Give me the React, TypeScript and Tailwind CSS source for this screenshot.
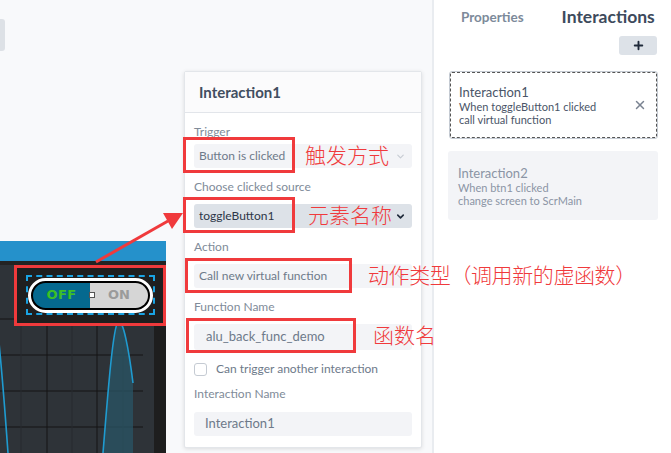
import { X, ChevronDown, Plus } from 'lucide-react';

const RED = '#f03a3c';

const Field = ({ value, dark, chevron }: { value: string; dark?: boolean; chevron?: 'light' | 'dark' }) => (
    <div className={`h-[24px] rounded-[3px] flex items-center justify-between pr-[6px] pl-[5px] text-[12px] ${dark ? 'bg-[#dde2e8] text-[#2d3748]' : 'bg-[#f3f4f7] text-[#6e7a8a]'}`}>
        <span>{value}</span>
        {chevron === 'light' && <ChevronDown size={11} strokeWidth={2.5} className="text-[#c7ccd3]" />}
        {chevron === 'dark' && <ChevronDown size={11} strokeWidth={3.5} className="text-[#1f2a3a]" />}
    </div>
);

const Label = ({ children, className = '' }: { children: React.ReactNode; className?: string }) => (
    <div className={`text-[12px] leading-[16px] text-[#808b99] ${className}`}>{children}</div>
);

const Device = () => (
    <div className="w-[166px] h-[212px] flex flex-col bg-[#1f1f1f]">
        <div className="h-[20px] bg-[#2591cb]" />
        <div className="h-[4px] bg-[#232323]" />
        <div className="relative flex-1 bg-[#2e3338]">
            <svg className="absolute inset-0" width="166" height="188" viewBox="0 24 166 188">
                <rect x="154" y="24" width="12" height="188" fill="#1e1e1e" />
                {[78, 114, 150, 186].map(y => (
                    <line key={y} x1="0" y1={y} x2="143" y2={y} stroke="#151515" strokeWidth="1" />
                ))}
                {[21, 72, 123].map(x => (
                    <line key={x} x1={x} y1="84" x2={x} y2="212" stroke="#262a2e" strokeWidth="1" />
                ))}
                {[47, 97].map(x => (
                    <line key={x} x1={x} y1="84" x2={x} y2="212" stroke="#151515" strokeWidth="1" />
                ))}
                <path d="M103 212 C108 150 113 86 118 81 C123 76 129 110 133 142 L133 212 Z" fill="#2a5566" fillOpacity="0.75" />
                <path d="M103 212 C108 150 113 86 118 81 C123 76 129 110 133 142" fill="none" stroke="#1f9bd0" strokeWidth="1.6" />
                <path d="M-2 92 C2 130 5 170 8 212" fill="none" stroke="#1f9bd0" strokeWidth="1.6" />
            </svg>
            <div className="relative ml-[14px] w-[152px] h-[60px] bg-[#1f1f1f] flex items-center pl-[12px]">
                <div className="w-[129px] h-[40px] border-2 border-dashed border-[#1aa3e2] flex items-center justify-center">
                    <div className="relative w-[125px] h-[35px] rounded-full border-[3px] border-white bg-black p-[2px] flex">
                        <div className="flex-1 flex rounded-full overflow-hidden">
                            <div className="w-[57px] bg-[#05698f] flex items-center justify-center text-[13px] font-bold text-[#3cc025] font-['DejaVu_Sans',sans-serif] tracking-wide">OFF</div>
                            <div className="flex-1 bg-[#d6d6d6] flex items-center justify-center text-[13px] font-bold text-[#9b9b9b] font-['DejaVu_Sans',sans-serif]">ON</div>
                        </div>
                        <div className="absolute left-[58px] top-[11px] w-[6px] h-[6px] bg-white border border-[#555]" />
                    </div>
                </div>
            </div>
        </div>
    </div>
);

const Annotations = () => (
    <div className="absolute inset-0 pointer-events-none font-['Noto_Sans_CJK_SC',sans-serif] font-light text-[21px] leading-none" style={{ color: RED }}>
        <div className="absolute left-[14px] top-[265px] w-[152px] h-[61px] border-[3px] border-[#f03a3c]" />
        <div className="absolute left-[183px] top-[137px] w-[112px] h-[36px] border-[3px] border-[#f03a3c]" />
        <div className="absolute left-[183px] top-[197px] w-[112px] h-[36px] border-[3px] border-[#f03a3c]" />
        <div className="absolute left-[185px] top-[258px] w-[167px] h-[35px] border-[3px] border-[#f03a3c]" />
        <div className="absolute left-[186px] top-[318px] w-[170px] h-[35px] border-[3px] border-[#f03a3c]" />
        <div className="absolute left-[305px] top-[144px]">触发方式</div>
        <div className="absolute left-[308px] top-[204px]">元素名称</div>
        <div className="absolute left-[368px] top-[264px] tracking-[-0.4px]">动作类型（调用新的虚函数）</div>
        <div className="absolute left-[373px] top-[324px]">函数名</div>
        <svg className="absolute inset-0" width="671" height="453">
            <line x1="96" y1="262" x2="168" y2="221" stroke={RED} strokeWidth="3" />
            <polygon points="183,213 163,213 172,229" fill={RED} />
        </svg>
    </div>
);

export default function App() {
    return (
        <div className="relative w-[671px] h-[453px] overflow-hidden flex bg-white font-['Lato',sans-serif]">
            <div className="w-[432px] h-full bg-[#f8f9fb] flex">
                <div className="w-[184px] flex flex-col justify-between">
                    <div className="mt-[19px] w-[5px] h-[32px] bg-[#dde1e6] rounded-r-[3px]" />
                    <Device />
                </div>
                <div className="mt-[71px] w-[238px] h-[377px] bg-white border border-[#e3e6ea] shadow-[0_1px_4px_rgba(0,0,0,0.12)] rounded-[2px]">
                    <div className="h-[41px] px-[14px] flex items-center border-b border-[#e2e5ea] bg-[#fbfbfc] text-[15px] font-bold text-[#424e60]">
                        Interaction1
                    </div>
                    <div className="px-[9px]">
                        <Label className="mt-[11px] mb-[4px]">Trigger</Label>
                        <Field value="Button is clicked" chevron="light" />
                        <Label className="mt-[11px] mb-[9px]">Choose clicked source</Label>
                        <Field value="toggleButton1" dark chevron="dark" />
                        <Label className="mt-[11px] mb-[9px]">Action</Label>
                        <Field value="Call new virtual function" chevron="light" />
                        <Label className="mt-[11px] mb-[9px]">Function Name</Label>
                        <div className="h-[26px] rounded-[3px] bg-[#f3f4f7] flex items-center pl-[12px] text-[13px] text-[#6e7a8a]">alu_back_func_demo</div>
                        <div className="mt-[11px] h-[16px] flex items-center gap-[9px]">
                            <div className="w-[13px] h-[13px] rounded-[3px] border border-[#c5cbd3] bg-white" />
                            <span className="text-[12px] text-[#6e7a8a]">Can trigger another interaction</span>
                        </div>
                        <Label className="mt-[9px] mb-[10px]">Interaction Name</Label>
                        <div className="h-[24px] rounded-[3px] bg-[#f3f4f7] flex items-center pl-[11px] text-[13px] text-[#6e7a8a]">Interaction1</div>
                    </div>
                </div>
            </div>

            <div className="flex-1 border-l-2 border-[#e9ecf0] bg-white">
                <div className="h-[34px] flex items-center pl-[27px] gap-[38px]">
                    <span className="text-[13.5px] font-bold text-[#7d8a9a]">Properties</span>
                    <span className="text-[17.5px] font-bold text-[#3d4a5c]">Interactions</span>
                </div>
                <div className="flex justify-end pr-[14px] mt-[2px]">
                    <div className="w-[38px] h-[19px] rounded-[3px] bg-[#dde2e8] flex items-center justify-center">
                        <Plus size={13} strokeWidth={3.5} className="text-[#1f2a3a]" />
                    </div>
                </div>
                <div className="mt-[16px] ml-[15px] mr-[13px] h-[68px] rounded-[3px] border border-[#c5cbd3] outline-1 outline-dashed outline-[#555] -outline-offset-2 flex items-center justify-between pl-[9px] pr-[10px]">
                    <div className="text-[#4a5568]">
                        <div className="text-[13px] leading-[16px]">Interaction1</div>
                        <div className="text-[11px] leading-[13px]">When toggleButton1 clicked</div>
                        <div className="text-[11px] leading-[13px]">call virtual function</div>
                    </div>
                    <X size={14} strokeWidth={2.5} className="text-[#7a8391]" />
                </div>
                <div className="mt-[12px] ml-[14px] mr-[13px] h-[69px] rounded-[3px] bg-[#f3f4f7] flex items-center pl-[10px] text-[#8b95a5]">
                    <div>
                        <div className="text-[13px] leading-[16px]">Interaction2</div>
                        <div className="text-[11px] leading-[13px]">When btn1 clicked</div>
                        <div className="text-[11px] leading-[13px]">change screen to ScrMain</div>
                    </div>
                </div>
            </div>

            <Annotations />
        </div>
    );
}
